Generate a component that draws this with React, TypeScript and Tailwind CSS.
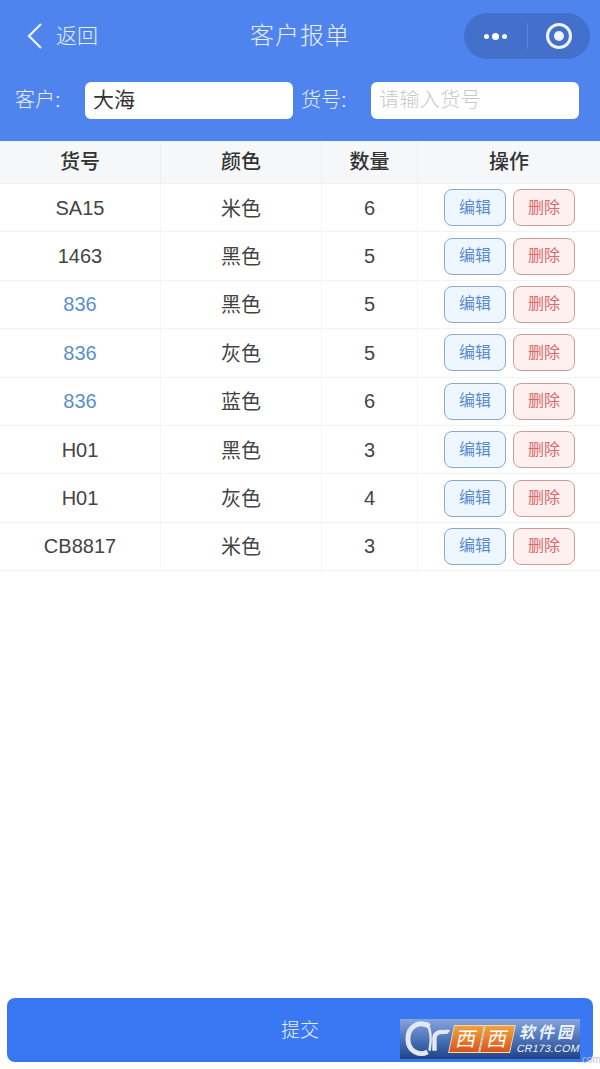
import React from 'react';

const font = { fontFamily: '"Liberation Sans", "Noto Sans CJK SC", sans-serif' };

interface Row {
  code: string;
  color: string;
  qty: number;
  linked?: boolean;
}

const rows: Row[] = [
  { code: 'SA15', color: '米色', qty: 6 },
  { code: '1463', color: '黑色', qty: 5 },
  { code: '836', color: '黑色', qty: 5, linked: true },
  { code: '836', color: '灰色', qty: 5, linked: true },
  { code: '836', color: '蓝色', qty: 6, linked: true },
  { code: 'H01', color: '黑色', qty: 3 },
  { code: 'H01', color: '灰色', qty: 4 },
  { code: 'CB8817', color: '米色', qty: 3 },
];

const cols = 'grid grid-cols-[161px_161px_96px_182px]';

const CapsuleMenu = () => (
  <div className="flex h-[46px] w-[126px] items-center rounded-full bg-[#4270cb]">
    <div className="flex h-full w-[63px] items-center justify-center gap-[3px]">
      <span className="h-[5px] w-[5px] rounded-full bg-white" />
      <span className="h-[7px] w-[7px] rounded-full bg-white" />
      <span className="h-[5px] w-[5px] rounded-full bg-white" />
    </div>
    <div className="h-[26px] w-px bg-[#5a84d6]" />
    <div className="flex flex-1 items-center justify-center">
      <div className="flex h-[26px] w-[26px] items-center justify-center rounded-full border-[3px] border-[#eef3fd]">
        <span className="h-[10px] w-[10px] rounded-full bg-[#eef3fd]" />
      </div>
    </div>
  </div>
);

// Download-site badge that sits on top of the submit button
const SiteBadge = () => (
  <div className="absolute left-[400px] top-[1019px] flex h-[40px] w-[180px] items-center bg-gradient-to-b from-[#86a6dc] via-[#4d74b8] to-[#1f4488] pl-[5px]">
    <svg width="47" height="38" viewBox="0 0 47 38" fill="none">
      <path d="M25 6C14 0 3 6 3 19c0 12 11 18 20 13" stroke="#e4e9ef" strokeWidth="5" />
      <path d="M22 2c5 8 5 18 3 29" stroke="#e4e9ef" strokeWidth="2.5" />
      <path d="M30 31V18c0-5 5-7 10-6" stroke="#e4e9ef" strokeWidth="4.5" />
      <path d="M37 13c2-4 6-4 9-3-2 4-5 5-9 3Z" fill="#e4e9ef" />
    </svg>
    <div className="flex">
      <span className="flex h-[28px] w-[31px] -skew-x-12 items-center justify-center border border-[#f6d9a8] bg-gradient-to-b from-[#f2a23c] to-[#d9541e] text-[20px] leading-none text-white">西</span>
      <span className="flex h-[28px] w-[31px] -skew-x-12 items-center justify-center border border-[#f6d9a8] bg-gradient-to-b from-[#f2a23c] to-[#d9541e] text-[20px] leading-none text-white">西</span>
    </div>
    <div className="ml-[4px] flex flex-col items-center text-[#eef2f8]">
      <span className="-skew-x-12 whitespace-nowrap text-[16px] font-bold leading-[18px] tracking-[3px]">软件园</span>
      <span className="-skew-x-12 whitespace-nowrap text-[10.5px] leading-[12px] tracking-[0.3px]">CR173.COM</span>
    </div>
  </div>
);

export default function App() {
  return (
    <div className="relative flex h-[1069px] w-[600px] flex-col overflow-hidden bg-white text-[#333]" style={font}>
      {/* top bar with title and search fields */}
      <header className="h-[141px] shrink-0 bg-[#4f84ee] font-light text-[#e8effc]">
        <div className="flex items-center pl-[25px] pr-[10px] pt-[13px]">
          <div className="flex w-[225px] items-center">
            <svg width="20" height="28" viewBox="0 0 20 28" fill="none" stroke="#e8effc" strokeWidth="2.4">
              <path d="M16 2 4 14l12 12" />
            </svg>
            <span className="-mt-[2px] ml-[11px] text-[21px] leading-none">返回</span>
          </div>
          <h1 className="w-[124px] whitespace-nowrap text-[24px] font-light leading-none tracking-[1px]">客户报单</h1>
          <div className="ml-auto">
            <CapsuleMenu />
          </div>
        </div>
        <div className="mt-[23px] flex items-center pl-[15px]">
          <span className="-mt-[1px] w-[70px] text-[20px] leading-none">客户:</span>
          <div className="flex h-[37px] w-[208px] items-center rounded-[6px] bg-white pb-[2px] pl-[8px] text-[21px] font-normal text-[#333]">大海</div>
          <span className="-mt-[1px] ml-[8px] w-[70px] text-[20px] leading-none">货号:</span>
          <div className="flex h-[37px] w-[208px] items-center rounded-[6px] bg-white pb-[2px] pl-[8px] text-[20px] tracking-[0.4px] text-[#c8c8c8]">请输入货号</div>
        </div>
      </header>

      <div className={`${cols} h-[43px] shrink-0 border-b border-[#eeeeee] bg-[#f6f7f9] text-[20px] font-medium text-[#333]`}>
        <div className="flex items-center justify-center border-r border-[#eeeeee] pb-[1px]">货号</div>
        <div className="flex items-center justify-center border-r border-[#eeeeee] pb-[1px]">颜色</div>
        <div className="flex items-center justify-center border-r border-[#eeeeee] pb-[1px]">数量</div>
        <div className="flex items-center justify-center pb-[1px]">操作</div>
      </div>

      {rows.map((row, i) => (
        <div key={i} className={`${cols} h-[48.4px] shrink-0 border-b border-[#f2f2f2] text-[20px] text-[#444]`}>
          <div className={`flex items-center justify-center border-r border-[#f5f5f5] ${row.linked ? 'text-[#5b8fc9]' : ''}`}>{row.code}</div>
          <div className="flex items-center justify-center border-r border-[#f5f5f5] pt-[2px]">{row.color}</div>
          <div className="flex items-center justify-center border-r border-[#f5f5f5]">{row.qty}</div>
          <div className="flex items-center justify-center gap-[7px] pl-[1px]">
            <button className="flex h-[37px] w-[62px] items-center justify-center rounded-[8px] border border-[#8aa9c9] bg-[#eef6ff] text-[16px] text-[#5b8bcf]">编辑</button>
            <button className="flex h-[37px] w-[62px] items-center justify-center rounded-[8px] border border-[#cf9a9a] bg-[#fff0f0] text-[16px] text-[#d96a6a]">删除</button>
          </div>
        </div>
      ))}

      <div className="mt-auto px-[7px] pb-[7px]">
        <button className="flex h-[64px] w-full items-center justify-center rounded-[8px] bg-[#3978f2] pt-[3px] text-[19px] font-light text-[#e8effc]">提交</button>
      </div>

      <SiteBadge />
      <span className="absolute left-[582px] top-[1055px] text-[10px] leading-none text-[#b9c4d2]">com</span>
    </div>
  );
}
